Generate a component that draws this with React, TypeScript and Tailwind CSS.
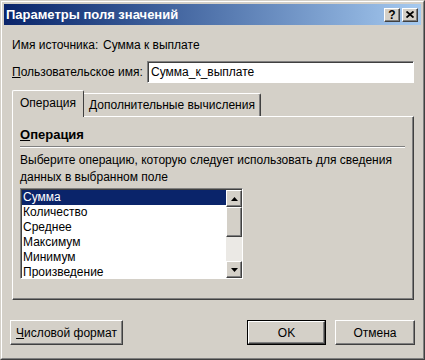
import React from "react";

const items = ["Сумма", "Количество", "Среднее", "Максимум", "Минимум", "Произведение"];

const raised =
  "border border-t-white border-l-white border-r-[#404040] border-b-[#404040] shadow-[inset_-1px_-1px_0_#808080]";

const ScrollArrow = ({ down }: { down?: boolean }) => (
  <div className={`w-[16px] h-[17px] bg-[#d4d0c8] flex items-center justify-center ${raised}`}>
    <svg width="7" height="4" viewBox="0 0 7 4">
      <path d={down ? "M0 0h7L3.5 4z" : "M0 4h7L3.5 0z"} fill="#000" />
    </svg>
  </div>
);

export default function App() {
  return (
    <div
      className="w-[425px] h-[360px] bg-[#d4d0c8] border border-t-[#d4d0c8] border-l-[#d4d0c8] border-r-[#404040] border-b-[#404040] text-[12px] text-black"
      style={{ fontFamily: '"Liberation Sans", Arial, sans-serif' }}
    >
      <div className="h-full border border-t-white border-l-white border-r-[#808080] border-b-[#808080] p-[2px] flex flex-col">
        {/* title bar */}
        <div className="h-[21px] flex items-center justify-between bg-gradient-to-r from-[#0a246a] to-[#a6caf0] pl-[2px] pr-[3px]">
          <span className="text-white font-bold text-[13px] leading-none">Параметры поля значений</span>
          <div className="flex gap-[2px]">
            <div className={`w-[16px] h-[14px] bg-[#d4d0c8] flex items-center justify-center font-bold text-[12px] leading-none ${raised}`}>
              ?
            </div>
            <div className={`w-[16px] h-[14px] bg-[#d4d0c8] flex items-center justify-center ${raised}`}>
              <svg width="8" height="7" viewBox="0 0 8 7">
                <path d="M0.5 0.5L7.5 6.5M7.5 0.5L0.5 6.5" stroke="#000" strokeWidth="1.8" />
              </svg>
            </div>
          </div>
        </div>

        {/* source name */}
        <div className="mt-[12px] pl-[8px] h-[15px] flex items-center">
          <span className="w-[91px]">Имя источника:</span>
          <span>Сумма к выплате</span>
        </div>

        {/* custom name */}
        <div className="mt-[9px] pl-[8px] flex items-center h-[22px]">
          <span className="w-[135px]">
            <span className="underline">П</span>ользовательское имя:
          </span>
          <div className="w-[267px] h-[22px] bg-white border border-t-[#808080] border-l-[#808080] border-r-white border-b-white shadow-[inset_1px_1px_0_#404040] flex items-center pl-[3px]">
            Сумма_к_выплате
          </div>
        </div>

        {/* tabs */}
        <div className="mt-[7px] ml-[8px] flex items-end h-[26px]">
          <div className="relative z-10 h-[27px] mb-[-1px] w-[72px] bg-[#d4d0c8] border-t border-l border-t-white border-l-white border-r border-r-[#404040] rounded-t-[2px] flex items-center justify-center pb-[2px]">
            Операция
          </div>
          <div className="h-[23px] w-[177px] border-t border-t-white border-r border-r-[#404040] shadow-[inset_-1px_0_0_#808080] rounded-tr-[2px] flex items-center justify-center">
            Дополнительные вычисления
          </div>
        </div>

        {/* panel */}
        <div className="ml-[8px] w-[402px] h-[184px] border border-t-white border-l-white border-r-[#404040] border-b-[#404040] shadow-[inset_-1px_-1px_0_#808080] pl-[7px] pt-[10px] flex flex-col">
          <div className="font-bold text-[13px] leading-[16px]">
            <span className="underline">О</span>перация
          </div>
          <div className="mt-[3px] w-[385px] border-t border-t-[#808080] border-b border-b-white" />
          <div className="mt-[4px] leading-[17px]">
            Выберите операцию, которую следует использовать для сведения
            <br />
            данных в выбранном поле
          </div>
          <div className="mt-[2px] w-[223px] h-[91px] bg-white border border-t-[#808080] border-l-[#808080] border-r-white border-b-white shadow-[inset_1px_1px_0_#404040] flex pt-[1px] pl-[1px]">
            <div className="flex-1 flex flex-col overflow-hidden">
              {items.map((it, i) => (
                <div
                  key={it}
                  className={`h-[15px] shrink-0 leading-[15px] pl-[1px] ${i === 0 ? "bg-[#0a246a] text-white" : ""}`}
                >
                  {it}
                </div>
              ))}
            </div>
            <div className="w-[16px] flex flex-col">
              <ScrollArrow />
              <div className={`h-[30px] bg-[#d4d0c8] ${raised}`} />
              <div className="flex-1 bg-[#ebe9e5]" />
              <ScrollArrow down />
            </div>
          </div>
        </div>

        {/* buttons */}
        <div className="mt-[20px] pl-[6px] flex items-center">
          <div className={`w-[113px] h-[25px] flex items-center justify-center ${raised}`}>
            <span className="underline">Ч</span>исловой формат
          </div>
          <div className="ml-auto w-[79px] h-[25px] border border-black flex">
            <div className={`flex-1 flex items-center justify-center ${raised}`}>OK</div>
          </div>
          <div className={`ml-[9px] mr-[6px] w-[80px] h-[25px] flex items-center justify-center ${raised}`}>
            Отмена
          </div>
        </div>
      </div>
    </div>
  );
}
